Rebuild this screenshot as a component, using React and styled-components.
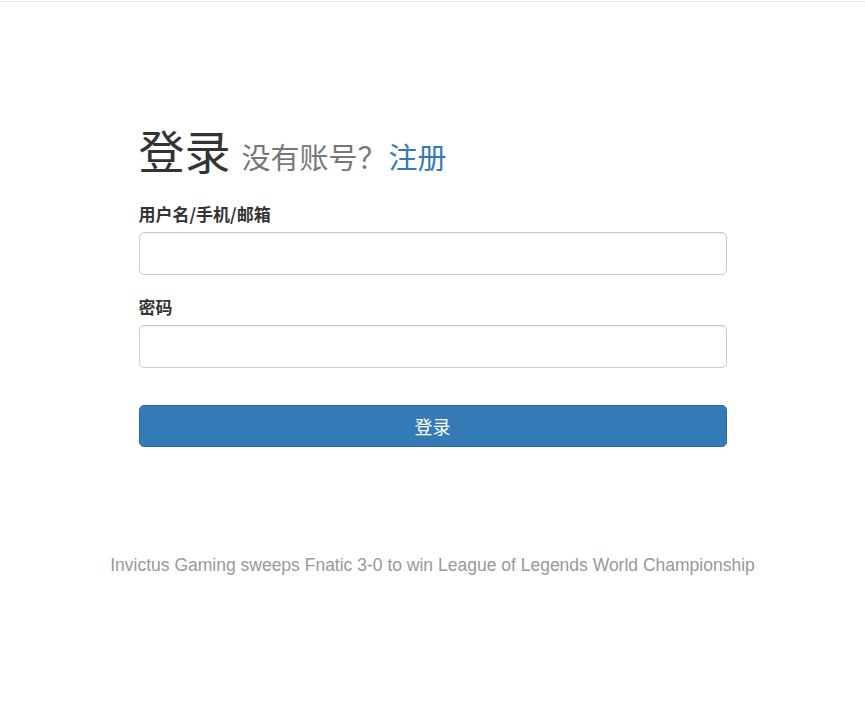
import React from "react";
import styled, { createGlobalStyle } from "styled-components";

const Global = createGlobalStyle`
  html, body { margin: 0; padding: 0; background: #fff; }
  body {
    font-family: "Liberation Sans", "Noto Sans CJK SC", sans-serif;
    color: #333;
  }
`;

const TopBar = styled.div`
  height: 1px;
  margin-top: 1px;
  background: #e3e3e3;
`;

const Page = styled.main`
  display: flex;
  flex-direction: column;
  align-items: center;
  padding-top: 122px;
`;

const Form = styled.form`
  width: 588px;
  display: flex;
  flex-direction: column;
`;

const Title = styled.h1`
  margin: 0 0 29px;
  font-family: "Noto Sans CJK SC", sans-serif;
  font-weight: 400;
  font-size: 46px;
  line-height: 1.1;
  color: #333;
`;

const Small = styled.small`
  font-size: 29px;
  color: #777;
  margin-left: 11px;
`;

const Link = styled.a`
  color: #337ab7;
  text-decoration: none;
  margin-left: 2px;
`;

const Field = styled.div`
  display: flex;
  flex-direction: column;
  margin-bottom: ${(p) => p.$mb || 22}px;
`;

const Label = styled.label`
  font-family: "Noto Sans CJK SC", sans-serif;
  font-weight: 700;
  font-size: 17px;
  line-height: 20px;
  margin-bottom: 8px;
  color: #333;
`;

const Input = styled.input`
  box-sizing: border-box;
  height: 43px;
  width: 100%;
  border: 1px solid #ccc;
  border-radius: 5px;
  box-shadow: inset 0 1px 1px rgba(0, 0, 0, 0.075);
  padding: 6px 12px;
  font-size: 16px;
  outline: none;
`;

const Button = styled.button`
  box-sizing: border-box;
  height: 42px;
  width: 100%;
  border: 1px solid #2e6da4;
  border-radius: 5px;
  background: #337ab7;
  color: #fff;
  font-family: "Noto Sans CJK SC", sans-serif;
  font-size: 18px;
  cursor: pointer;
`;

const Footer = styled.p`
  margin: 108px 0 0;
  font-family: "Liberation Sans", sans-serif;
  font-size: 17.5px;
  color: #999;
  text-align: center;
`;

export default function App() {
  return (
    <>
      <Global />
      <TopBar />
      <Page>
        <Form onSubmit={(e) => e.preventDefault()}>
          <Title>
            登录<Small>没有账号？<Link href="#">注册</Link></Small>
          </Title>
          <Field>
            <Label>用户名/手机/邮箱</Label>
            <Input type="text" />
          </Field>
          <Field $mb={37}>
            <Label>密码</Label>
            <Input type="password" />
          </Field>
          <Button type="submit">登录</Button>
        </Form>
        <Footer>Invictus Gaming sweeps Fnatic 3-0 to win League of Legends World Championship</Footer>
      </Page>
    </>
  );
}
